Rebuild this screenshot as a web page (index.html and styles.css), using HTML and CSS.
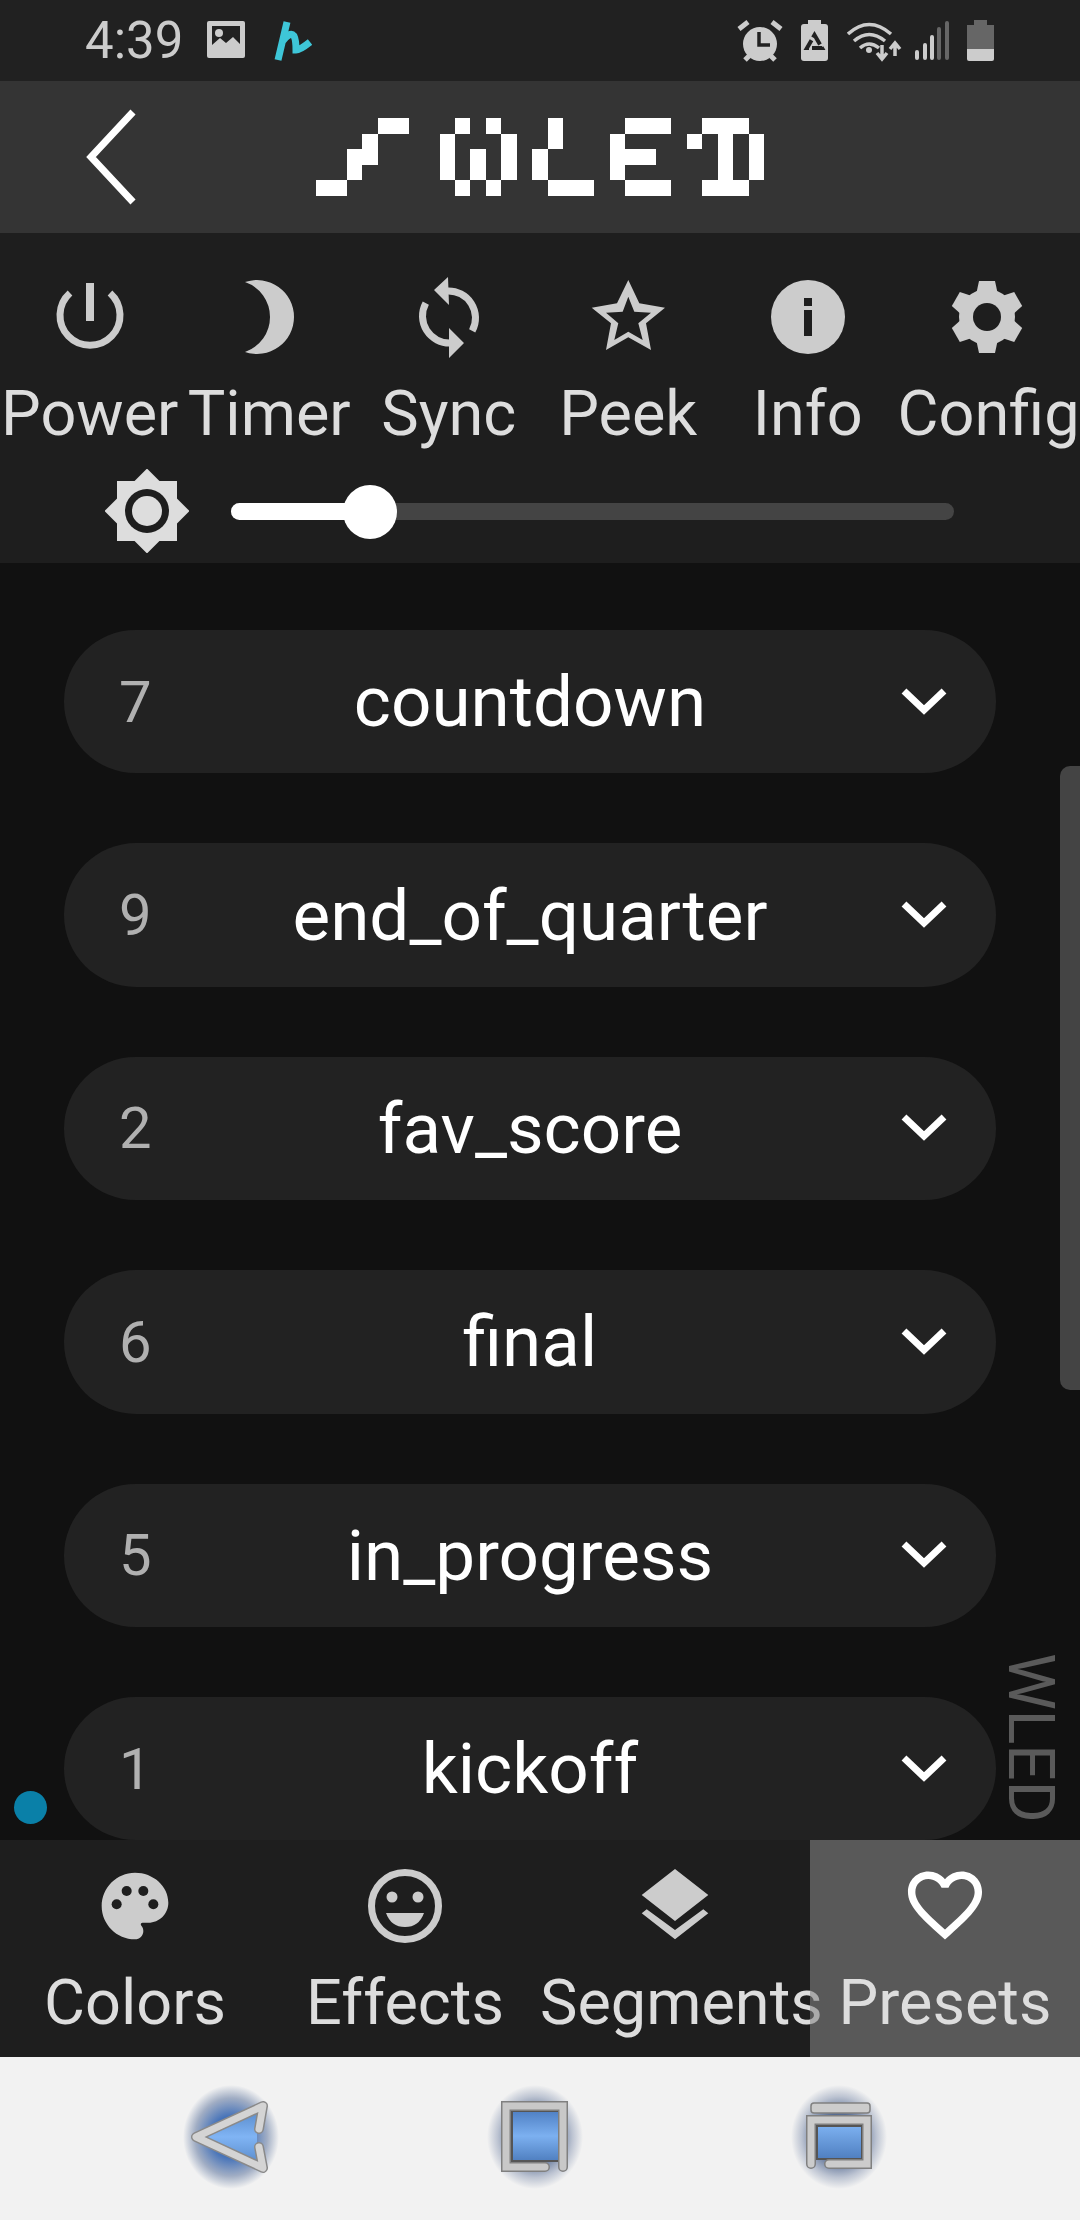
FILE: index.html
```html
<!DOCTYPE html>
<html lang="en">
<head>
<meta charset="utf-8">
<title>WLED</title>
<link rel="stylesheet" href="styles.css">
</head>
<body>
<div class="app">
  <div class="status">
    <span class="time">4:39</span>
    <svg class="st-img" width="38" height="38" viewBox="0 0 38 38"><rect width="38" height="37" rx="2" fill="#ccc"/><rect x="5" y="5" width="28" height="27" fill="#212121"/><circle cx="12" cy="12" r="4" fill="#ccc"/><path d="M5 32V24L13 17L19 22L26 16L33 23V32Z" fill="#ccc"/></svg>
    <svg class="st-h" width="38" height="42" viewBox="0 0 38 42"><path d="M13 2L4 40M8 22Q16 11 20 16Q22 20 22 30Q26 30 36 22" fill="none" stroke="#3ec6d8" stroke-width="7"/></svg>
    <span class="st-space"></span>
    <svg width="46" height="42" viewBox="0 0 46 42"><circle cx="23" cy="24" r="17" fill="#ccc"/><path d="M2 9L11 2M44 9L35 2M8 40L12 36M38 40L34 36" stroke="#ccc" stroke-width="5" fill="none"/><path d="M22 12V25H33" stroke="#212121" stroke-width="3.5" fill="none"/></svg>
    <svg class="st-rec" width="29" height="42" viewBox="0 0 29 42"><rect x="8" y="0" width="13" height="6" fill="#ccc"/><rect x="1" y="4" width="27" height="37" rx="3" fill="#ccc"/><path d="M14.500 15L22 28H7Z" fill="none" stroke="#212121" stroke-width="4" stroke-dasharray="11 3"/></svg>
    <svg class="st-wifi" width="56" height="42" viewBox="0 0 56 42"><g fill="none" stroke="#ccc" stroke-width="3.500"><path d="M1 14Q22 -5 44 14"/><path d="M7 21Q22 8 38 21"/><path d="M13 28Q22 20 32 28"/></g><circle cx="22" cy="30" r="3" fill="#ccc"/><path d="M35 25V38M30 33L35 39L40 33M48 36V24M43 29L48 23L53 29" fill="none" stroke="#ccc" stroke-width="3.500"/></svg>
    <svg class="st-sig" width="36" height="42" viewBox="0 0 36 42"><path d="M3 38V32M11 38V25M18 38V17" stroke="#ccc" stroke-width="4" stroke-linecap="round"/><path d="M25 38V9M33 38V3" stroke="#666" stroke-width="4" stroke-linecap="round"/></svg>
    <svg class="st-bat" width="28" height="42" viewBox="0 0 28 42"><path d="M7 0H20V5H27V29H0V5H7Z" fill="#666"/><path d="M0 29H27V39Q27 41 25 41H2Q0 41 0 39Z" fill="#ccc"/></svg>
  </div>

  <header class="header">
    <svg class="back" width="54" height="96" viewBox="0 0 54 96"><path d="M49 3L7 48L49 93" fill="none" stroke="#fff" stroke-width="7"/></svg>
    <svg class="logo" width="448" height="78" viewBox="0 0 29 5" shape-rendering="crispEdges" fill="#fff">
      <path d="M4 0h2v1h-2zM3 1h1v1h-1zM2 2h2v1h-2zM2 3h1v1h-1zM0 4h2v1h-2z"/>
      <path d="M9 0h1v1h-1zM11 0h1v1h-1zM8 1h1v3h-1zM12 1h1v3h-1zM10 2h1v2h-1zM9 4h1v1h-1zM11 4h1v1h-1z"/>
      <path d="M15 0h1v2h-1zM14 2h1v2h-1zM15 4h3v1h-3z"/>
      <path d="M20 0h3v1h-3zM19 1h1v3h-1zM20 2h2v1h-2zM20 4h3v1h-3z"/>
      <path d="M25 0h3v1h-3zM24 1h1v1h-1zM26 1h1v3h-1zM28 1h1v3h-1zM25 4h3v1h-3z"/>
    </svg>
  </header>

  <section class="topbar">
    <div class="btns">
      <div class="btn">
        <svg class="ico" viewBox="0 0 80 80"><path d="M20 16A30 30 0 1 0 60 16" fill="none" stroke="#ccc" stroke-width="7"/><rect x="36" y="6" width="8" height="38" fill="#ccc"/></svg>
        <span class="lbl">Power</span>
      </div>
      <div class="btn">
        <svg class="ico" viewBox="0 0 80 80"><path d="M16 5A37 37 0 1 1 16 75A37 37 0 0 0 16 5Z" fill="#ccc"/></svg>
        <span class="lbl">Timer</span>
      </div>
      <div class="btn">
        <svg class="ico" viewBox="0 0 80 80"><g fill="none" stroke="#ccc" stroke-width="7"><path d="M38 14A27 27 0 0 1 63.200 53.900"/><path d="M42 66A27 27 0 0 1 16.800 26.100"/></g><path d="M39 0L25 13L40 28ZM40 51L55 66L40 81Z" fill="#ccc"/></svg>
        <span class="lbl">Sync</span>
      </div>
      <div class="btn">
        <svg class="ico" viewBox="0 0 80 80"><path fill="#ccc" fill-rule="evenodd" d="M40.300 3L51.300 26.300L77 30.700L58 46.300L63 73L40.300 60.300L18 73L23 46.300L3.700 30.700L29 26.300ZM40.300 19.700L34.700 34.700L18 35.700L30.300 46.300L26.300 63L40.300 54.700L54.700 63L50.300 46.300L63 35.700L46.300 34.700Z"/></svg>
        <span class="lbl">Peek</span>
      </div>
      <div class="btn">
        <svg class="ico" viewBox="0 0 80 80"><circle cx="40" cy="40" r="37" fill="#ccc"/><path d="M36 21h8v8h-8zM36 33h8v26h-8z" fill="#1e1e1e"/></svg>
        <span class="lbl">Info</span>
      </div>
      <div class="btn">
        <svg class="ico" viewBox="-40 -40 80 80"><g fill="#ccc"><circle r="28"/><path d="M-8 -36H8L11 -22H-11Z"/><path d="M-8 -36H8L11 -22H-11Z" transform="rotate(60)"/><path d="M-8 -36H8L11 -22H-11Z" transform="rotate(120)"/><path d="M-8 -36H8L11 -22H-11Z" transform="rotate(180)"/><path d="M-8 -36H8L11 -22H-11Z" transform="rotate(240)"/><path d="M-8 -36H8L11 -22H-11Z" transform="rotate(300)"/></g><circle r="14" fill="#1e1e1e"/></svg>
        <span class="lbl">Config</span>
      </div>
    </div>
    <div class="bright">
      <svg class="sun" width="84" height="84" viewBox="-42 -42 84 84"><rect x="-30" y="-30" width="60" height="60" fill="#ddd"/><rect x="-30" y="-30" width="60" height="60" fill="#ddd" transform="rotate(45)"/><circle r="22" fill="#1e1e1e"/><circle r="15" fill="#ddd"/></svg>
      <div class="track">
        <div class="fill"></div>
        <div class="thumb"></div>
      </div>
    </div>
  </section>

  <main class="list">
    <div class="rows">
      <div class="row"><span class="num">7</span><span class="name">countdown</span><svg class="chev" width="48" height="30" viewBox="0 0 48 30"><path d="M4 4L24 23L44 4" fill="none" stroke="#fff" stroke-width="7"/></svg></div>
      <div class="row"><span class="num">9</span><span class="name">end_of_quarter</span><svg class="chev" width="48" height="30" viewBox="0 0 48 30"><path d="M4 4L24 23L44 4" fill="none" stroke="#fff" stroke-width="7"/></svg></div>
      <div class="row"><span class="num">2</span><span class="name">fav_score</span><svg class="chev" width="48" height="30" viewBox="0 0 48 30"><path d="M4 4L24 23L44 4" fill="none" stroke="#fff" stroke-width="7"/></svg></div>
      <div class="row"><span class="num">6</span><span class="name">final</span><svg class="chev" width="48" height="30" viewBox="0 0 48 30"><path d="M4 4L24 23L44 4" fill="none" stroke="#fff" stroke-width="7"/></svg></div>
      <div class="row"><span class="num">5</span><span class="name">in_progress</span><svg class="chev" width="48" height="30" viewBox="0 0 48 30"><path d="M4 4L24 23L44 4" fill="none" stroke="#fff" stroke-width="7"/></svg></div>
      <div class="row"><span class="num">1</span><span class="name">kickoff</span><svg class="chev" width="48" height="30" viewBox="0 0 48 30"><path d="M4 4L24 23L44 4" fill="none" stroke="#fff" stroke-width="7"/></svg></div>
    </div>
    <div class="scrollbar"></div>
    <div class="wled">WLED</div>
    <div class="dot"></div>
  </main>

  <nav class="tabs">
    <div class="tab">
      <svg class="ico" viewBox="0 0 24 24"><path fill="#ccc" d="M12 2C6.490 2 2 6.490 2 12s4.490 10 10 10c1.380 0 2.500-1.120 2.500-2.500 0-.61-.23-1.200-.64-1.670-.08-.1-.13-.21-.13-.33 0-.28.22-.5.5-.5H16c3.310 0 6-2.690 6-6 0-4.960-4.490-9-10-9z"/><g fill="#1e1e1e"><circle cx="6.500" cy="11.500" r="1.500"/><circle cx="9.500" cy="7.500" r="1.500"/><circle cx="14.500" cy="7.500" r="1.500"/><circle cx="17.500" cy="11.500" r="1.500"/></g></svg>
      <span class="lbl">Colors</span>
    </div>
    <div class="tab">
      <svg class="ico" viewBox="-40 -40 80 80"><circle r="33.500" fill="none" stroke="#ccc" stroke-width="7"/><circle cx="-13" cy="-9" r="5.500" fill="#ccc"/><circle cx="13" cy="-9" r="5.500" fill="#ccc"/><path d="M-19 7H19Q14 21 0 21Q-14 21 -19 7Z" fill="#ccc"/></svg>
      <span class="lbl">Effects</span>
    </div>
    <div class="tab">
      <svg class="ico" viewBox="0 0 80 80"><path fill="#ccc" d="M40 3L73.300 29L40 55L6.700 29ZM6.700 47.300L11.700 43.300L40 64L68.300 43.300L73.300 47.300L40 73.300Z"/></svg>
      <span class="lbl">Segments</span>
    </div>
    <div class="tab tab-on">
      <svg class="ico" viewBox="1.200 1.500 21.600 21.600"><path fill="#fff" d="M16.500 3c-1.740 0-3.410.81-4.500 2.090C10.910 3.810 9.240 3 7.500 3 4.420 3 2 5.420 2 8.500c0 3.780 3.400 6.860 8.550 11.540L12 21.350l1.450-1.320C18.600 15.360 22 12.280 22 8.500 22 5.420 19.580 3 16.500 3zm-4.400 15.550l-.1.1-.1-.1C7.140 14.240 4 11.390 4 8.500 4 6.500 5.500 5 7.500 5c1.540 0 3.040.99 3.570 2.360h1.870C13.460 5.990 14.960 5 16.500 5c2 0 3.500 1.500 3.500 3.500 0 2.890-3.140 5.740-7.900 10.050z"/></svg>
      <span class="lbl">Presets</span>
    </div>
  </nav>

  <footer class="sysnav">
    <div class="glow glow-strong">
      <svg width="96" height="104" viewBox="0 0 96 104">
        <defs><linearGradient id="b1" x1="0" y1="0" x2="0" y2="1"><stop offset="0" stop-color="#5a8ccc"/><stop offset=".5" stop-color="#80b4f4"/><stop offset="1" stop-color="#5a8ccc"/></linearGradient></defs>
        <path d="M22 52L74 26V78Z" fill="url(#b1)"/>
        <path d="M76 44L80 21L13 52L80 83L76 62" fill="none" stroke="#8a8a8a" stroke-width="10" stroke-linejoin="round" stroke-linecap="round"/>
        <path d="M76 44L80 21L13 52L80 83L76 62" fill="none" stroke="#d4d4d4" stroke-width="7" stroke-linejoin="round" stroke-linecap="round"/>
      </svg>
    </div>
    <div class="glow">
      <svg width="96" height="104" viewBox="0 0 96 104">
        <defs><linearGradient id="b2" x1="0" y1="0" x2="0" y2="1"><stop offset="0" stop-color="#4f80c4"/><stop offset=".5" stop-color="#7cb0f0"/><stop offset="1" stop-color="#4f7fc0"/></linearGradient></defs>
        <rect x="25" y="26" width="47" height="50" fill="url(#b2)" stroke="#555" stroke-width="2"/>
        <path d="M76 82V21H19V82H58" fill="none" stroke="#808080" stroke-width="10" stroke-linecap="round"/>
        <path d="M76 82V21H19V82H58" fill="none" stroke="#c8c8c8" stroke-width="7" stroke-linecap="round"/>
      </svg>
    </div>
    <div class="glow">
      <svg width="96" height="104" viewBox="0 0 96 104">
        <defs><linearGradient id="b3" x1="0" y1="0" x2="0" y2="1"><stop offset="0" stop-color="#7cb0f0"/><stop offset="1" stop-color="#4f7fc0"/></linearGradient></defs>
        <rect x="20" y="18" width="59" height="10" rx="3" fill="#ccc" stroke="#808080" stroke-width="1.500"/>
        <rect x="26" y="41" width="45" height="33" fill="url(#b3)" stroke="#555" stroke-width="2"/>
        <path d="M20 79V35H76V79H38" fill="none" stroke="#808080" stroke-width="10" stroke-linecap="round"/>
        <path d="M20 79V35H76V79H38" fill="none" stroke="#cccccc" stroke-width="7" stroke-linecap="round"/>
      </svg>
    </div>
  </footer>
</div>
</body>
</html>
```
FILE: styles.css
```css
* { box-sizing: border-box; }
html, body { margin: 0; padding: 0; background: #111; }
.app {
  width: 1080px;
  height: 2220px;
  display: flex;
  flex-direction: column;
  overflow: hidden;
  font-family: Roboto, "Liberation Sans", sans-serif;
}
svg { display: block; flex: none; }

/* status bar */
.status {
  height: 81px;
  flex: none;
  background: #212121;
  display: flex;
  align-items: center;
  padding: 0 85px 0 85px;
}
.time { font-size: 51px; color: #ccc; line-height: 1; width: 122px; }
.st-img { margin-top: -2px; }
.st-h { margin-left: 29px; }
.st-space { flex: 1; }
.st-rec { margin-left: 17px; }
.st-wifi { margin-left: 18px; }
.st-sig { margin-left: 11px; }
.st-bat { margin-left: 17px; }

/* header */
.header {
  height: 152px;
  flex: none;
  background: #343434;
  display: flex;
  align-items: center;
  padding-left: 84px;
}
.logo { margin-left: 178px; }

/* top buttons */
.topbar {
  height: 330px;
  flex: none;
  background: #1e1e1e;
  padding-top: 44px;
}
.btns {
  display: grid;
  grid-template-columns: repeat(6, 179.5px);
}
.btn, .tab { text-align: center; white-space: nowrap; min-width: 0; }
.ico { width: 80px; height: 80px; margin: 0 auto 21px; overflow: visible; }
.lbl { display: block; font-size: 63px; line-height: 72px; color: #ddd; }
.bright {
  display: flex;
  align-items: center;
  margin-top: 19px;
  padding-left: 105px;
  gap: 42px;
}
.track {
  position: relative;
  width: 723px;
  height: 17px;
  border-radius: 9px;
  background: #444;
}
.fill { width: 139px; height: 17px; border-radius: 9px 0 0 9px; background: #fff; }
.thumb {
  position: absolute;
  left: 112px;
  top: -18px;
  width: 54px;
  height: 54px;
  border-radius: 50%;
  background: #fff;
}

/* list */
.list {
  position: relative;
  flex: none;
  height: 1277px;
  background: #111;
  overflow: hidden;
  padding: 67px 84px 0 64px;
}
.rows { display: flex; flex-direction: column; gap: 70px; }
.row {
  flex: none;
  height: 143.4px;
  border-radius: 72px;
  background: #222;
  display: grid;
  grid-template-columns: 1fr auto 1fr;
  align-items: center;
  padding: 0 48px;
}
.num { font-size: 58px; color: #b0b0b0; line-height: 1; margin-left: 7px; }
.name { font-size: 71px; color: #fff; line-height: 1; text-align: center; }
.chev { justify-self: end; }
.scrollbar {
  position: absolute;
  left: 1060px;
  top: 203px;
  width: 20px;
  height: 624px;
  border-radius: 10px 0 0 10px;
  background: #444;
}
.wled {
  position: absolute;
  left: 1000px;
  top: 1090px;
  writing-mode: vertical-rl;
  font-size: 64px;
  line-height: 60px;
  color: #5a5a5a;
}
.dot {
  position: absolute;
  left: 14px;
  top: 1228px;
  width: 33px;
  height: 33px;
  border-radius: 50%;
  background: #0a80a8;
}

/* bottom tabs */
.tabs {
  height: 217px;
  flex: none;
  background: #1e1e1e;
  display: grid;
  grid-template-columns: repeat(4, 270px);
  padding-top: 26px;
}
.tab-on {
  position: relative;
  margin-top: -26px;
  padding-top: 26px;
  background: rgba(133, 133, 133, .58);
}

/* system nav */
.sysnav {
  flex: none;
  height: 163px;
  background: #f2f2f2;
  display: flex;
  gap: 208px;
  padding: 28px 0 0 183px;
}
.glow {
  width: 96px;
  height: 104px;
  border-radius: 50%;
  background: radial-gradient(closest-side, rgba(60, 85, 130, .85) 45%, rgba(90, 110, 150, .35) 78%, rgba(242, 242, 242, 0) 100%);
}
.glow-strong {
  background: radial-gradient(closest-side, rgba(70, 115, 185, 1) 40%, rgba(80, 105, 150, .5) 75%, rgba(242, 242, 242, 0) 100%);
}
```
